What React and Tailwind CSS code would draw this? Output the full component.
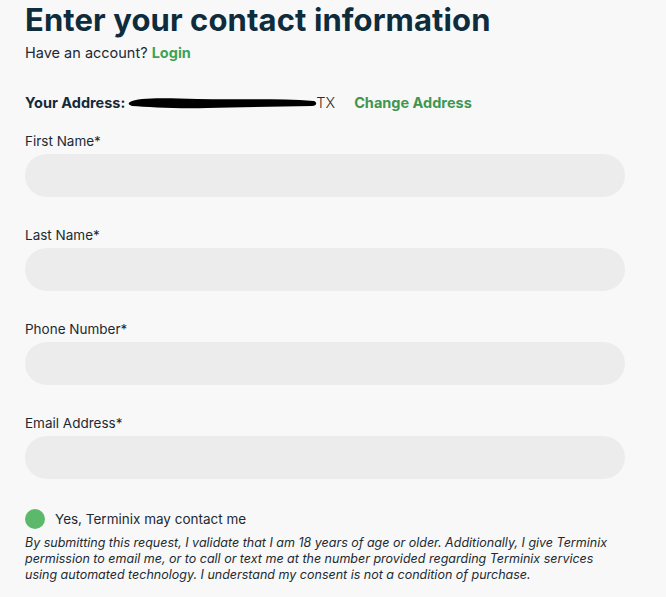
import React from 'react';

const fields = ['First Name*', 'Last Name*', 'Phone Number*', 'Email Address*'];

const App = () => {
  return (
    <div
      className="min-h-[597px] w-full bg-[#f8f8f8] px-[25px] text-[#0f2a3a]"
      style={{ fontFamily: 'Inter, "Noto Sans", sans-serif' }}
    >
      <h1 className="pt-[2px] text-[31px] font-bold leading-[36px] tracking-[0.1px] text-[#0e2c3c]">
        Enter your contact information
      </h1>
      <p className="mt-[5px] text-[14.5px] leading-[20px] text-[#1c2a33]">
        Have an account? <a className="font-bold text-[#3ea355]">Login</a>
      </p>

      {/* Address row */}
      <div className="mt-[30px] flex items-center text-[14.5px] leading-[20px]">
        <span className="font-bold text-[#13293a]">Your Address:</span>
        <span className="relative ml-[3px] flex items-center">
          <svg width="190" height="16" viewBox="0 0 192 16" className="block">
            <path
              d="M2 7 C 10 2, 40 3, 70 4 C 110 5, 150 3, 188 6 C 192 8, 190 11, 186 11 C 150 12, 110 12, 80 13 C 50 14, 20 12, 4 11 C 0 10, 0 8, 2 7 Z"
              fill="#000"
            />
          </svg>
          <span className="-ml-[2px] font-light text-[#2a2a2a]">TX</span>
        </span>
        <a className="ml-[19px] font-bold text-[#3e9651]">Change Address</a>
      </div>

      {/* Inputs */}
      <div className="mt-[20px] flex w-[600px] flex-col gap-[30px]">
        {fields.map((label) => (
          <label key={label} className="flex flex-col">
            <span className="text-[13.5px] leading-[16px] text-[#1c2a33]">{label}</span>
            <input
              type="text"
              className="mt-[5px] h-[43px] w-full rounded-full bg-[#ececec] px-5 outline-none"
            />
          </label>
        ))}
      </div>

      {/* Consent */}
      <div className="mt-[30px] flex items-center">
        <span className="h-[20px] w-[20px] rounded-full bg-[#5cb96c]" />
        <span className="ml-[10px] text-[13.5px] leading-[16px] text-[#1c2a33]">
          Yes, Terminix may contact me
        </span>
      </div>
      <p className="mt-[6px] w-[600px] text-[12.5px] italic leading-[16px] text-[#1c2a33]">
        By submitting this request, I validate that I am 18 years of age or older. Additionally, I give Terminix
        permission to email me, or to call or text me at the number provided regarding Terminix services
        using automated technology. I understand my consent is not a condition of purchase.
      </p>
    </div>
  );
};

export default App;
